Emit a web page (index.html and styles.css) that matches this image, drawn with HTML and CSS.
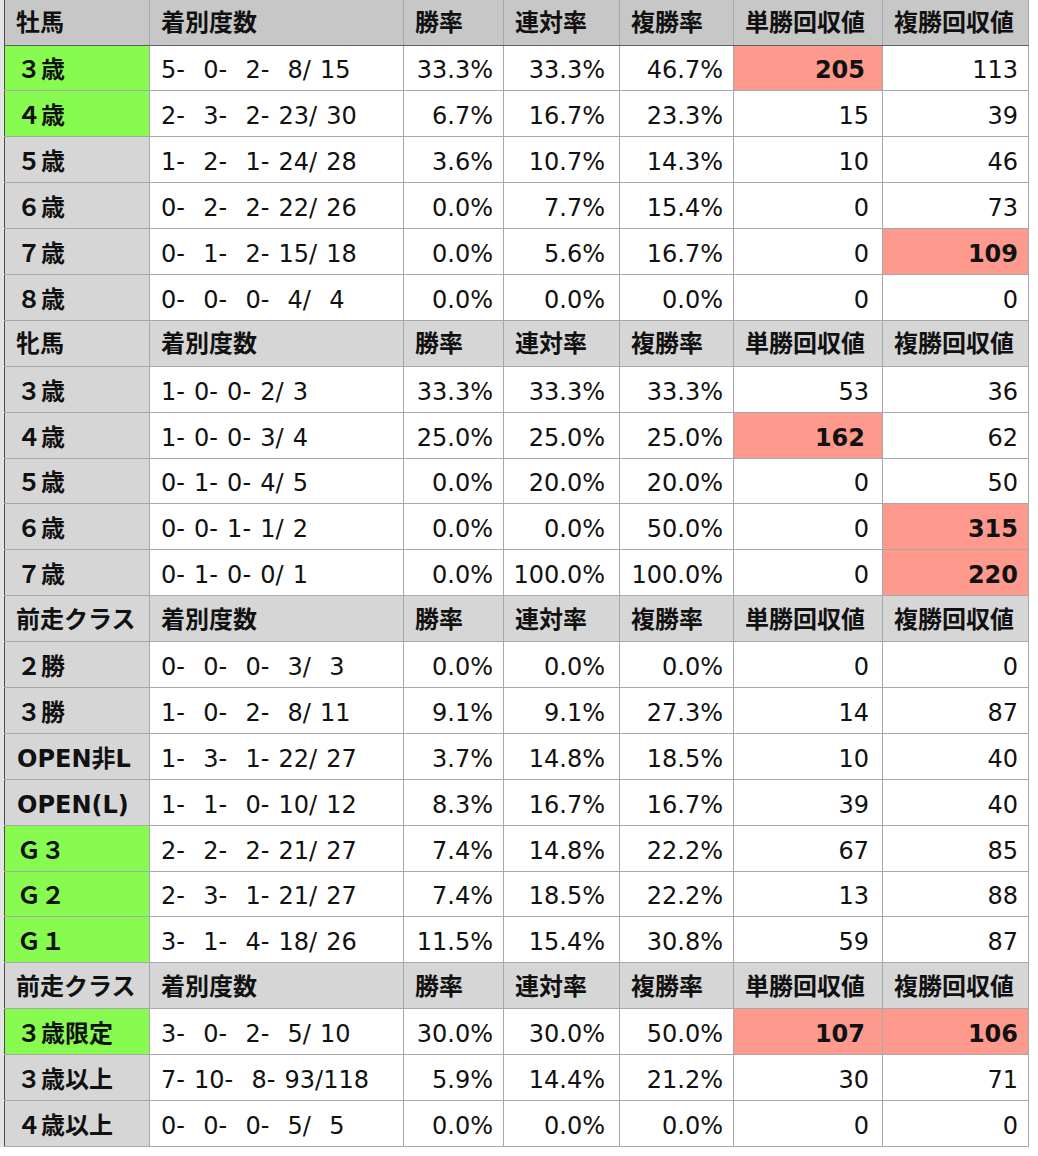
FILE: index.html
```html
<!DOCTYPE html>
<html lang="ja">
<head>
<meta charset="utf-8">
<title>成績表</title>
<link rel="stylesheet" href="styles.css">
</head>
<body>
<div class="frame">
<table class="stats">
<colgroup>
<col class="c1"><col class="c2"><col class="c3"><col class="c4"><col class="c5"><col class="c6"><col class="c7">
</colgroup>
<tbody>
<tr class="head first"><th>牡馬</th><th>着別度数</th><th>勝率</th><th>連対率</th><th>複勝率</th><th>単勝回収値</th><th>複勝回収値</th></tr>
<tr><td class="lab hl">３歳</td><td class="rec">5-  0-  2-  8/ 15</td><td>33.3%</td><td>33.3%</td><td>46.7%</td><td class="hot">205</td><td>113</td></tr>
<tr><td class="lab hl">４歳</td><td class="rec">2-  3-  2- 23/ 30</td><td>6.7%</td><td>16.7%</td><td>23.3%</td><td>15</td><td>39</td></tr>
<tr><td class="lab">５歳</td><td class="rec">1-  2-  1- 24/ 28</td><td>3.6%</td><td>10.7%</td><td>14.3%</td><td>10</td><td>46</td></tr>
<tr><td class="lab">６歳</td><td class="rec">0-  2-  2- 22/ 26</td><td>0.0%</td><td>7.7%</td><td>15.4%</td><td>0</td><td>73</td></tr>
<tr><td class="lab">７歳</td><td class="rec">0-  1-  2- 15/ 18</td><td>0.0%</td><td>5.6%</td><td>16.7%</td><td>0</td><td class="hot">109</td></tr>
<tr><td class="lab">８歳</td><td class="rec">0-  0-  0-  4/  4</td><td>0.0%</td><td>0.0%</td><td>0.0%</td><td>0</td><td>0</td></tr>
<tr class="head"><th>牝馬</th><th>着別度数</th><th>勝率</th><th>連対率</th><th>複勝率</th><th>単勝回収値</th><th>複勝回収値</th></tr>
<tr><td class="lab">３歳</td><td class="rec">1- 0- 0- 2/ 3</td><td>33.3%</td><td>33.3%</td><td>33.3%</td><td>53</td><td>36</td></tr>
<tr><td class="lab">４歳</td><td class="rec">1- 0- 0- 3/ 4</td><td>25.0%</td><td>25.0%</td><td>25.0%</td><td class="hot">162</td><td>62</td></tr>
<tr><td class="lab">５歳</td><td class="rec">0- 1- 0- 4/ 5</td><td>0.0%</td><td>20.0%</td><td>20.0%</td><td>0</td><td>50</td></tr>
<tr><td class="lab">６歳</td><td class="rec">0- 0- 1- 1/ 2</td><td>0.0%</td><td>0.0%</td><td>50.0%</td><td>0</td><td class="hot">315</td></tr>
<tr><td class="lab">７歳</td><td class="rec">0- 1- 0- 0/ 1</td><td>0.0%</td><td>100.0%</td><td>100.0%</td><td>0</td><td class="hot">220</td></tr>
<tr class="head"><th>前走クラス</th><th>着別度数</th><th>勝率</th><th>連対率</th><th>複勝率</th><th>単勝回収値</th><th>複勝回収値</th></tr>
<tr><td class="lab">２勝</td><td class="rec">0-  0-  0-  3/  3</td><td>0.0%</td><td>0.0%</td><td>0.0%</td><td>0</td><td>0</td></tr>
<tr><td class="lab">３勝</td><td class="rec">1-  0-  2-  8/ 11</td><td>9.1%</td><td>9.1%</td><td>27.3%</td><td>14</td><td>87</td></tr>
<tr><td class="lab">OPEN非L</td><td class="rec">1-  3-  1- 22/ 27</td><td>3.7%</td><td>14.8%</td><td>18.5%</td><td>10</td><td>40</td></tr>
<tr><td class="lab">OPEN(L)</td><td class="rec">1-  1-  0- 10/ 12</td><td>8.3%</td><td>16.7%</td><td>16.7%</td><td>39</td><td>40</td></tr>
<tr><td class="lab hl">Ｇ３</td><td class="rec">2-  2-  2- 21/ 27</td><td>7.4%</td><td>14.8%</td><td>22.2%</td><td>67</td><td>85</td></tr>
<tr><td class="lab hl">Ｇ２</td><td class="rec">2-  3-  1- 21/ 27</td><td>7.4%</td><td>18.5%</td><td>22.2%</td><td>13</td><td>88</td></tr>
<tr><td class="lab hl">Ｇ１</td><td class="rec">3-  1-  4- 18/ 26</td><td>11.5%</td><td>15.4%</td><td>30.8%</td><td>59</td><td>87</td></tr>
<tr class="head"><th>前走クラス</th><th>着別度数</th><th>勝率</th><th>連対率</th><th>複勝率</th><th>単勝回収値</th><th>複勝回収値</th></tr>
<tr><td class="lab hl">３歳限定</td><td class="rec">3-  0-  2-  5/ 10</td><td>30.0%</td><td>30.0%</td><td>50.0%</td><td class="hot">107</td><td class="hot">106</td></tr>
<tr><td class="lab">３歳以上</td><td class="rec">7- 10-  8- 93/118</td><td>5.9%</td><td>14.4%</td><td>21.2%</td><td>30</td><td>71</td></tr>
<tr><td class="lab">４歳以上</td><td class="rec">0-  0-  0-  5/  5</td><td>0.0%</td><td>0.0%</td><td>0.0%</td><td>0</td><td>0</td></tr>
</tbody>
</table>
</div>
</body>
</html>
```
FILE: styles.css
```css
html, body {
  margin: 0;
  padding: 0;
  background: #ffffff;
}
body {
  font-family: "DejaVu Sans", "Noto Sans CJK JP", sans-serif;
  font-size: 24px;
  color: #111;
}
.frame {
  display: flex;
  width: 1029px;
  background: #e4e4e4;
  padding-left: 4px;
  box-sizing: border-box;
}
.stats {
  border-collapse: collapse;
  table-layout: fixed;
  width: 1025px;
  background: #fff;
}
.c1 { width: 145px; }
.c2 { width: 254px; }
.c3 { width: 100px; }
.c4 { width: 116px; }
.c5 { width: 114px; }
.c6 { width: 149px; }
.c7 { width: 146px; }

.stats th,
.stats td {
  border: 1px solid #a8a8a8;
  height: 45.9px;
  padding: 0;
  line-height: 1;
  white-space: nowrap;
  overflow: hidden;
  box-sizing: border-box;
  vertical-align: middle;
}
.stats td {
  padding-top: 5px;
}
.stats th {
  padding-top: 2px;
}
.stats tr > :first-child {
  border-left: 1px solid #4d4d4d;
}
.stats tr:first-child > * {
  border-top: none;
  height: 45px;
}
.head th {
  background: #d6d6d6;
  font-weight: 700;
  text-align: left;
  padding-left: 11px;
}
.head.first th {
  background: #c6c7c6;
  border-bottom: 1px solid #5e5e5e;
}
.stats td {
  text-align: right;
  background: #fff;
}
.stats td:nth-child(3) { padding-right: 10px; }
.stats td:nth-child(4) { padding-right: 14px; }
.stats td:nth-child(5) { padding-right: 10px; }
.stats td:nth-child(6) { padding-right: 13px; }
.stats td:nth-child(7) { padding-right: 10px; }
.stats td.lab {
  text-align: left;
  padding-left: 12px;
  font-weight: 700;
  background: #d6d6d6;
}
.stats td.lab.hl {
  background: #88fb50;
}
.stats td.rec {
  text-align: left;
  padding-left: 11px;
  white-space: pre;
  word-spacing: 1.5px;
}
.stats td.hot {
  background: #fd998d;
  font-weight: 700;
}
.stats td.hot:nth-child(6) {
  padding-right: 17px;
}
```
